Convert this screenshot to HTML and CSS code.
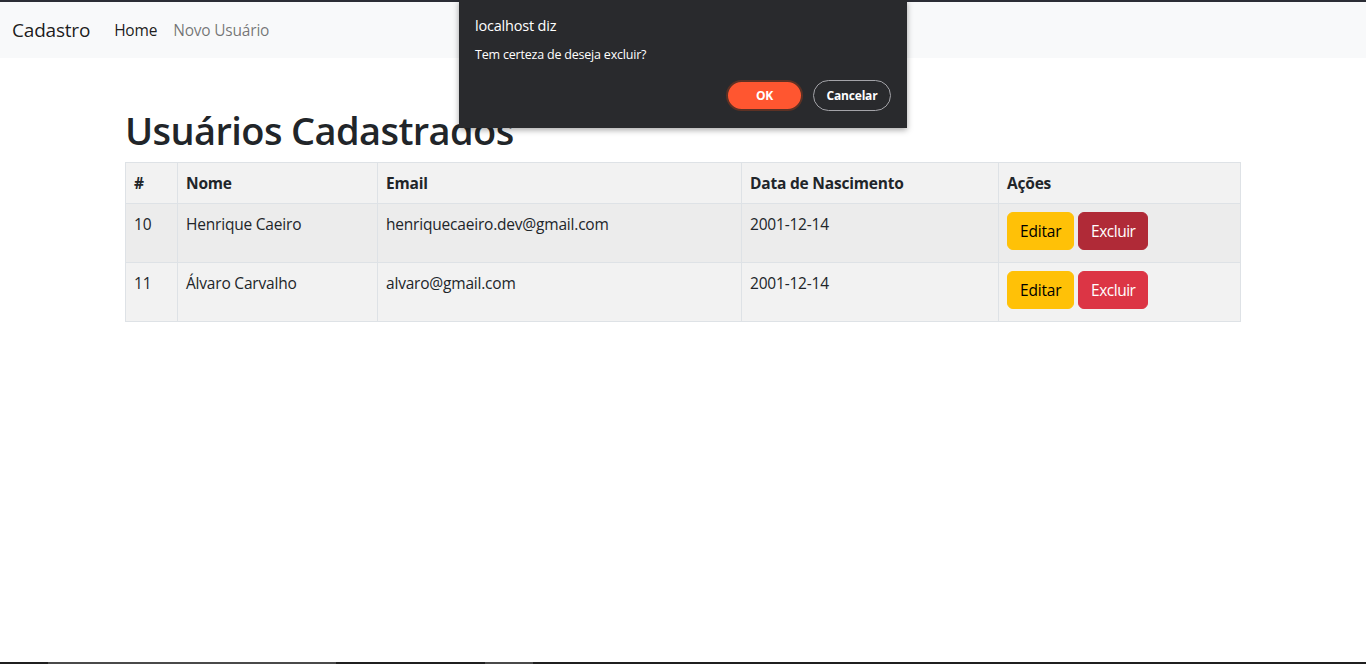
FILE: index.html
```html
<!DOCTYPE html>
<html lang="pt-br">
<head>
<meta charset="utf-8">
<title>Cadastro</title>
<link rel="stylesheet" href="styles.css">
</head>
<body>
<div class="frame-top"></div>
<nav class="navbar">
  <a class="brand" href="#">Cadastro</a>
  <ul class="nav">
    <li><a class="nav-link active" href="#">Home</a></li>
    <li><a class="nav-link" href="#">Novo Usuário</a></li>
  </ul>
</nav>
<main class="container">
  <h1 class="title">Usuários Cadastrados</h1>
  <table class="table">
    <thead>
      <tr>
        <th class="c-id">#</th>
        <th class="c-name">Nome</th>
        <th class="c-email">Email</th>
        <th class="c-date">Data de Nascimento</th>
        <th class="c-act">Ações</th>
      </tr>
    </thead>
    <tbody>
      <tr class="hover">
        <td>10</td>
        <td>Henrique Caeiro</td>
        <td>henriquecaeiro.dev@gmail.com</td>
        <td>2001-12-14</td>
        <td><a class="btn btn-warning" href="#">Editar</a> <button class="btn btn-danger hovered">Excluir</button></td>
      </tr>
      <tr>
        <td>11</td>
        <td>Álvaro Carvalho</td>
        <td>alvaro@gmail.com</td>
        <td>2001-12-14</td>
        <td><a class="btn btn-warning" href="#">Editar</a> <button class="btn btn-danger">Excluir</button></td>
      </tr>
    </tbody>
  </table>
</main>
<div class="spacer"></div>
<div class="frame-bottom">
  <span class="seg seg1"></span><span class="seg seg2"></span>
</div>

<div class="dialog" role="dialog">
  <div class="dialog-title">localhost diz</div>
  <div class="dialog-msg">Tem certeza de deseja excluir?</div>
  <div class="dialog-actions">
    <button class="dbtn dbtn-ok">OK</button>
    <button class="dbtn dbtn-cancel">Cancelar</button>
  </div>
</div>
</body>
</html>
```

FILE: styles.css
```css
* { box-sizing: border-box; }
html, body { height: 100%; }
body {
  margin: 0;
  font-family: "Open Sans", "Noto Sans", "Liberation Sans", sans-serif;
  font-size: 16px;
  line-height: 24px;
  color: #212529;
  background: #fff;
  display: flex;
  flex-direction: column;
  overflow: hidden;
}
.frame-top { height: 2px; background: #2b2d35; flex: none; }
.navbar {
  flex: none;
  height: 56px;
  background: #f8f9fa;
  display: flex;
  align-items: center;
  padding: 0 12px;
}
.brand {
  font-size: 19px;
  line-height: 30px;
  color: rgba(0,0,0,.9);
  text-decoration: none;
  margin-right: 16px;
  letter-spacing: -0.2px;
}
.nav { list-style: none; margin: 0; padding: 0; display: flex; }
.nav-link {
  display: block;
  padding: 8px 8px;
  font-size: 15.5px;
  color: rgba(0,0,0,.55);
  text-decoration: none;
  letter-spacing: -0.2px;
}
.nav-link.active { color: rgba(0,0,0,.9); }

.container {
  flex: none;
  width: 100%;
  max-width: 1140px;
  margin: 0 auto;
  padding: 0 12px;
}
.title {
  margin: 48px 0 8px;
  font-size: 38px;
  line-height: 48px;
  font-weight: 600;
  letter-spacing: -0.6px;
}
.table {
  width: 100%;
  border-collapse: collapse;
  border: 1px solid #dee2e6;
  background: #f2f2f2;
  font-size: 15.5px;
}
.table th, .table td {
  border: 1px solid #dee2e6;
  padding: 8px;
  text-align: left;
  vertical-align: top;
  letter-spacing: -0.2px;
}
.table th { font-weight: 700; }
.table tbody td { height: 59px; }
.table tr.hover td { background: #ececec; }
.c-id { width: 52px; }
.c-name { width: 200px; }
.c-email { width: 364px; }
.c-date { width: 257px; }

.btn {
  display: inline-block;
  font-family: inherit;
  font-size: 15.5px;
  line-height: 24px;
  padding: 6px 12px;
  border: 1px solid transparent;
  border-radius: 6px;
  text-decoration: none;
  cursor: pointer;
  vertical-align: top;
  letter-spacing: -0.2px;
}
.btn-warning { background: #ffc107; border-color: #ffc107; color: #000; }
.btn-danger { background: #dc3545; border-color: #dc3545; color: #fff; letter-spacing: -0.5px; }
.btn-danger.hovered { background: #b02a37; border-color: #b02a37; }

.spacer { flex: 1; }
.frame-bottom {
  flex: none;
  height: 2px;
  background: #1f1f1f;
  display: flex;
}
.seg { display: block; height: 2px; }
.seg1 { margin-left: 48px; width: 288px; background: #4a4a4a; }
.seg2 { margin-left: 149px; width: 48px; background: #4a4a4a; }

.dialog {
  position: absolute;
  left: 459px;
  top: 0;
  width: 448px;
  height: 128px;
  background: #292a2d;
  color: #fff;
  font-family: "Open Sans", "Noto Sans", "Liberation Sans", sans-serif;
  padding: 15px 16px 0;
  box-shadow: 0 2px 6px rgba(0,0,0,.35);
}
.dialog-title {
  font-size: 14.5px;
  line-height: 22px;
  letter-spacing: -0.2px;
}
.dialog-msg {
  margin-top: 9px;
  font-size: 12.5px;
  line-height: 18px;
  letter-spacing: -0.2px;
}
.dialog-actions {
  margin-top: 16px;
  display: flex;
  justify-content: flex-end;
  gap: 10px;
}
.dbtn {
  font-family: inherit;
  font-size: 12px;
  font-weight: 700;
  height: 31px;
  border-radius: 16px;
  padding: 0;
  letter-spacing: -0.2px;
}
.dbtn-ok {
  width: 77px;
  background: #ff5630;
  color: #fff;
  border: 2px solid #5d3124;
}
.dbtn-cancel {
  width: 78px;
  background: transparent;
  color: #fff;
  border: 1px solid #a3a3a8;
}
```
